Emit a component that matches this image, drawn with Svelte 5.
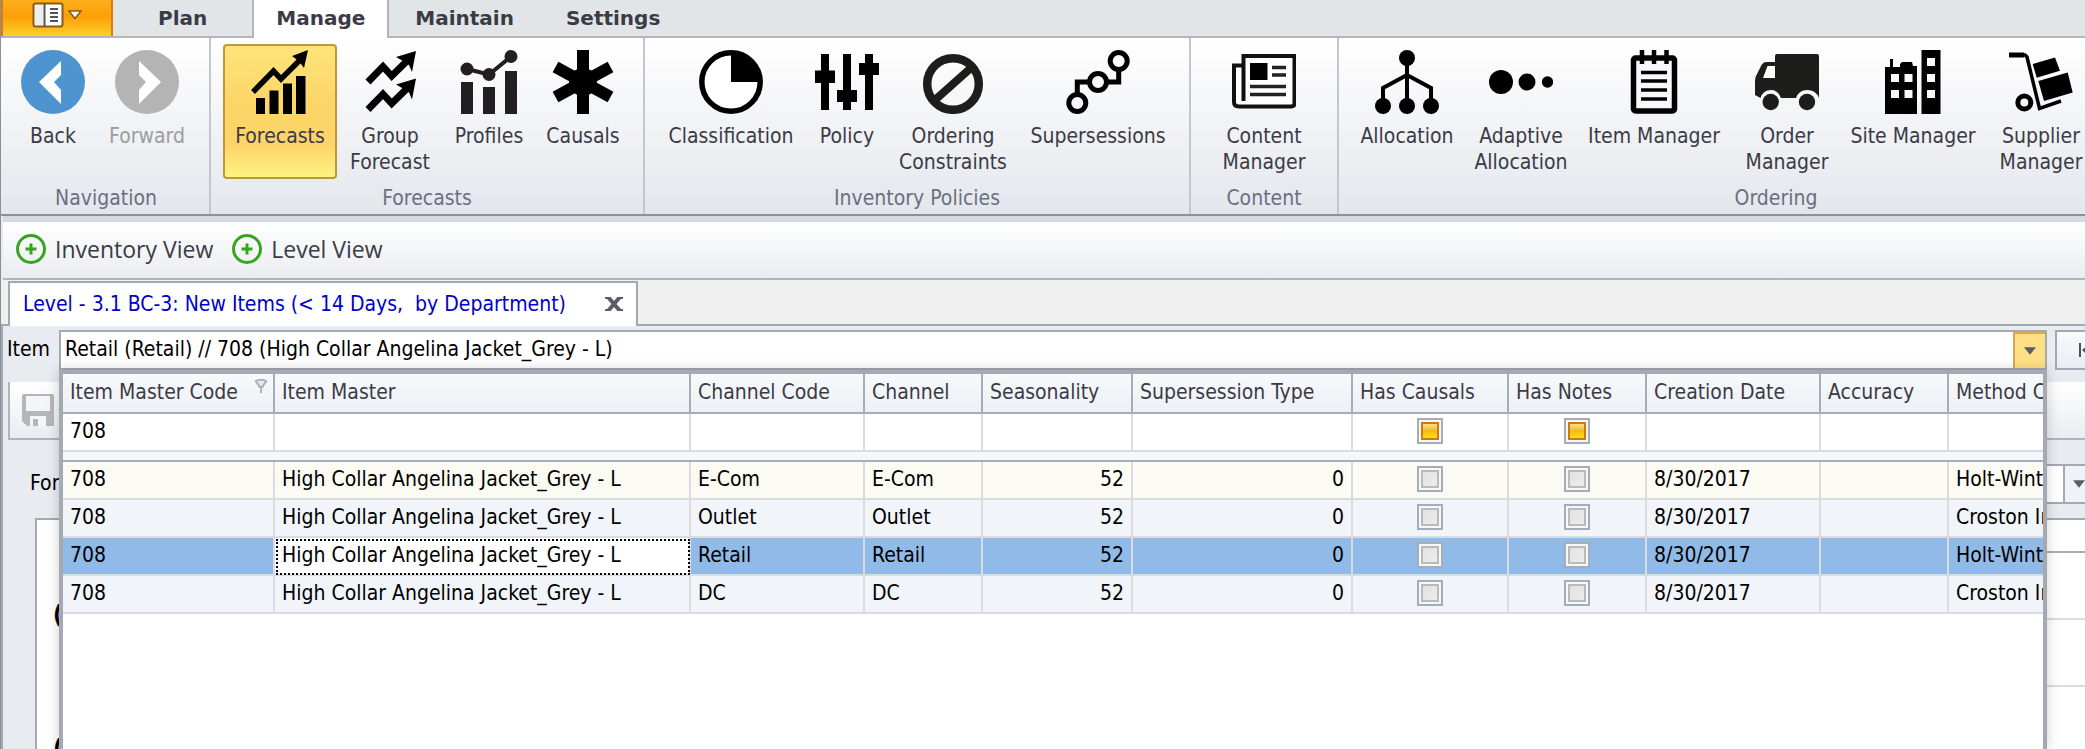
<script>
  const icons = {
    back: '<circle cx="32" cy="32" r="32" fill="#4e94d0"/><path fill="#fff" d="M40 11v14l-7 7 7 8v14L18 32z"/>',
    forward: '<circle cx="32" cy="32" r="32" fill="#b4b4b4"/><path fill="#fff" d="M24 11v14l7 7-7 8v14l22-22z"/>',
    forecasts: '<path d="M8 48h9v16H8zM21.500 40.500h9V64h-9zM35 33.500h9V64h-9zM48 26h9.500v38H48z"/><path d="M5 42L25.500 21l7.500 8L52 10" fill="none" stroke="#000" stroke-width="5.500"/><path d="M60 0L44 6l4 3 5 5 3 4z"/>',
    group: '<path d="M10 32L25 16.500l8.700 9.500L50 10M10 59.500L25 44l8.700 9.500L50 37.500" fill="none" stroke="#000" stroke-width="7"/><path d="M58 1L38 7l7 4 6 4 3 7zM58 28.500l-20 6 7 4 6 4 3 7z"/>',
    profiles: '<g fill="#231f20"><path d="M4 32h12v32H4zM26 37h12v27H26zM48 21h12v43H48z"/><circle cx="10" cy="19" r="6.500"/><circle cx="32" cy="24.500" r="6.500"/><circle cx="54" cy="6.500" r="6.500"/><path d="M10 19l22 5.500L54 6.500" fill="none" stroke="#231f20" stroke-width="4"/></g>',
    causals: '<path d="M32 0v64M4.500 17l55 30M59.500 17l-55 30" fill="none" stroke="#000" stroke-width="12"/><circle cx="32" cy="32" r="14"/>',
    classification: '<circle cx="32" cy="32" r="29.200" fill="#fff" stroke="#000" stroke-width="5.500"/><path d="M32 2v30h30A30 30 0 0 0 32 2z"/>',
    policy: '<path d="M6 4h8v56H6zM0 20.500h20V33H0zM28 4h8v56h-8zM22 40h20v12H22zM50 4h8v56h-8zM44 13h20v12H44z"/>',
    constraints: '<circle cx="32" cy="34" r="25.800" fill="none" stroke="#1d1d1b" stroke-width="8.500"/><path d="M14 50L51 17" stroke="#1d1d1b" stroke-width="8"/>',
    supersessions: '<g fill="none" stroke="#000" stroke-width="5"><circle cx="52.700" cy="11" r="8.500"/><circle cx="32" cy="32" r="8.500"/><circle cx="11.300" cy="53" r="8.500"/><path d="M11.300 44V32h12M41 32h11.700V20"/></g>',
    content: '<path fill="#fff" stroke="#111" stroke-width="4" d="M12 15.500H2V52q0 4.500 5 4.500h52q3.500 0 3.500-3.500V6h-51v45"/><path d="M18 13h17.500v17H18z"/><path d="M40 17.500h14M40 25h14M18 36.500h36M18 44.500h36" stroke="#222" stroke-width="3.500"/>',
    allocation: '<circle cx="32" cy="8" r="8"/><circle cx="8" cy="56" r="8"/><circle cx="32" cy="56" r="8"/><circle cx="56" cy="56" r="8"/><path d="M32 8v48M8 56V38l24-13 24 13v18" fill="none" stroke="#000" stroke-width="4"/>',
    adaptive: '<circle cx="12" cy="32" r="12"/><circle cx="38" cy="32" r="8.500"/><circle cx="58.500" cy="32" r="5.700"/>',
    item: '<rect x="11.500" y="8" width="41" height="53" rx="2" fill="#f7f8f9" stroke="#000" stroke-width="5.500"/><path d="M19 22.500h26M19 31h26M19 40h26M19 49h26" stroke="#000" stroke-width="3.500"/><path d="M20 0v14M32 0v14M44.500 0v14" stroke="#000" stroke-width="4.500"/>',
    order: '<g fill="#1d1d1b"><path d="M20 12V6q0-2 2-2h40q2 0 2 2v42q-3-8-12-8-8 0-11 8H26q-3-8-10-8-8 0-10.500 8L0 45V31q0-3 1-5l5-10q2-4 5-4z"/><circle cx="15.700" cy="52" r="8.200"/><circle cx="52" cy="52" r="8.200"/></g><path fill="#fff" d="M12.500 16H20v12H8z"/>',
    site: '<path fill-rule="evenodd" d="M4 17h5V9h3v8h7v-3l2-2h10l1 4h4v48H4zM10 24v8h8v-8zM23.500 24v8h8v-8zM10 40v8h8v-8zM23.500 40v8h8v-8zM40.500 0h19v64h-19zM46 8v8h8V8zM46 24v8h8v-8zM46 40v8h8v-8z"/>',
    supplier: '<path d="M0 5h16l2 2 12.500 51.500L52 51" fill="none" stroke="#000" stroke-width="3.500"/><path d="M0 2.500h15v5H0zM23.700 14L46 7.500l5 13.200-23.300 7zM29.300 31l29.400-8.500 5 20L35 51z"/><circle cx="15.300" cy="52.500" r="6.500" fill="none" stroke="#000" stroke-width="5"/>'
  };

  const groups = [
    { name: 'Navigation', width: 208, items: [
      { icon: 'back', label: 'Back', width: 92 },
      { icon: 'forward', label: 'Forward', width: 96, disabled: true } ] },
    { name: 'Forecasts', width: 434, items: [
      { icon: 'forecasts', label: 'Forecasts', width: 114, active: true },
      { icon: 'group', label: 'Group Forecast', width: 106 },
      { icon: 'profiles', label: 'Profiles', width: 92 },
      { icon: 'causals', label: 'Causals', width: 96 } ] },
    { name: 'Inventory Policies', width: 546, items: [
      { icon: 'classification', label: 'Classification', width: 144 },
      { icon: 'policy', label: 'Policy', width: 88 },
      { icon: 'constraints', label: 'Ordering Constraints', width: 124 },
      { icon: 'supersessions', label: 'Supersessions', width: 166 } ] },
    { name: 'Content', width: 148, items: [
      { icon: 'content', label: 'Content Manager', width: 120 } ] },
    { name: 'Ordering', width: 876, items: [
      { icon: 'allocation', label: 'Allocation', width: 112 },
      { icon: 'adaptive', label: 'Adaptive Allocation', width: 116 },
      { icon: 'item', label: 'Item Manager', width: 150 },
      { icon: 'order', label: 'Order Manager', width: 116 },
      { icon: 'site', label: 'Site Manager', width: 136 },
      { icon: 'supplier', label: 'Supplier Manager', width: 120 } ] }
  ];

  const tabs = ['Plan', 'Manage', 'Maintain', 'Settings'];
  let activeTab = $state('Manage');

  const columns = [
    { name: 'Item Master Code', width: 212 },
    { name: 'Item Master', width: 416 },
    { name: 'Channel Code', width: 174 },
    { name: 'Channel', width: 118 },
    { name: 'Seasonality', width: 150 },
    { name: 'Supersession Type', width: 220 },
    { name: 'Has Causals', width: 156 },
    { name: 'Has Notes', width: 138 },
    { name: 'Creation Date', width: 174 },
    { name: 'Accuracy', width: 128 },
    { name: 'Method Code', width: 200 }
  ];

  const item = 'High Collar Angelina Jacket_Grey - L';
  const rows = [
    { channel: 'E-Com', method: 'Holt-Winters' },
    { channel: 'Outlet', method: 'Croston Intermittent' },
    { channel: 'Retail', method: 'Holt-Winters' },
    { channel: 'DC', method: 'Croston Intermittent' }
  ];
  let selected = $state(2);
</script>

<div class="app">
  <nav class="tabs">
    <button class="menu" aria-label="Application menu">
      <svg width="32" height="26" viewBox="0 0 32 26"><rect x="1.500" y="1.500" width="29" height="23" rx="2" fill="#fff" stroke="#8a5a10" stroke-width="2"/><path d="M3 3h8v20H3z" fill="#eee"/><path d="M12.500 2v22" stroke="#555" stroke-width="2"/><path d="M18 7h8M18 11h8M18 15h8M18 19h8" stroke="#555" stroke-width="2"/></svg>
      <svg width="14" height="10" viewBox="0 0 14 10"><path d="M1 1h12L7 8.500z" fill="#fff" stroke="#8a5a10" stroke-width="1.500"/></svg>
    </button>
    {#each tabs as tab}
      <button class="tab" class:current={tab === activeTab} onclick={() => (activeTab = tab)}>{tab}</button>
    {/each}
  </nav>

  <header class="ribbon">
    {#each groups as group}
      <section class="group" style="width: {group.width}px">
        <div class="tools">
          {#each group.items as tool}
            <button class="tool" class:active={tool.active} disabled={tool.disabled} style="width: {tool.width}px">
              <svg width="64" height="64" viewBox="0 0 64 64">{@html icons[tool.icon]}</svg>
              <span>{tool.label}</span>
            </button>
          {/each}
        </div>
        <div class="caption">{group.name}</div>
      </section>
    {/each}
  </header>

  <div class="views">
    {#each ['Inventory View', 'Level View'] as view}
      <button>
        <svg width="32" height="32" viewBox="0 0 32 32" fill="none" stroke="#37a31f" stroke-width="3"><circle cx="16" cy="16" r="13.500"/><path d="M16 10.500v11M10.500 16h11"/></svg>
        {view}
      </button>
    {/each}
  </div>

  <div class="documents">
    <div class="document">
      <a href="#level">Level - 3.1 BC-3: New Items (&lt; 14 Days,&nbsp; by Department)</a>
      <button aria-label="Close"><svg width="18" height="14" viewBox="0 0 18 14"><path d="M3 0l12 14M15 0L3 14" stroke="#5a5e66" stroke-width="4"/><path d="M0 1h6M12 1h6M0 13h6M12 13h6" stroke="#5a5e66" stroke-width="2"/></svg></button>
    </div>
  </div>

  <main class="workspace">
    <div class="picker">
      <label for="item">Item</label>
      <div class="combo">
        <input id="item" type="text" value="Retail (Retail) // 708 (High Collar Angelina Jacket_Grey - L)" />
        <button aria-label="Open list"><svg width="12" height="8" viewBox="0 0 14 9"><path d="M0 0h14L7 9z" fill="#5a5e66"/></svg></button>
      </div>
      <button class="first" aria-label="First item"><svg width="20" height="14" viewBox="0 0 20 14"><path d="M1 0v14" stroke="#4c5058" stroke-width="2"/><path d="M3 7l8-7v5h9v4h-9v5z" fill="#4c5058"/></svg></button>
    </div>

    <div class="actions">
      <button aria-label="Save" disabled><svg width="32" height="32" viewBox="0 0 32 32"><path fill="#b4b6b9" d="M2 0h28q2 0 2 2v30H5l-5-5V2q0-2 2-2z"/><path fill="#f4f5f7" d="M4 2h24v15H4zM8 22h16v10H8z"/><path fill="#b4b6b9" d="M11 25h5v7h-5z"/></svg></button>
    </div>

    <div class="options">
      <label for="forecast">Forecast</label>
      <select id="forecast"><option></option></select>
      <span class="arrow"><svg width="12" height="8" viewBox="0 0 14 9"><path d="M0 0h14L7 9z" fill="#5a5e66"/></svg></span>
    </div>

    <div class="chart">
      <div class="axis"><span>(</span><span>(</span></div>
      <div class="plot"><i></i><i></i><i></i></div>
    </div>

    <div class="popup">
      <table>
        <colgroup>
          {#each columns as column}<col style="width: {column.width}px" />{/each}
        </colgroup>
        <thead>
          <tr>
            {#each columns as column, i}
              <th>
                <div class="heading">
                  {column.name}
                  {#if i === 0}<svg width="14" height="14" viewBox="0 0 14 16"><path d="M1 2.500Q7-1 13 2.500L9 8v1H5V8zM7 8v8" fill="#e4e8ee" stroke="#a4abb5" stroke-width="2"/></svg>{/if}
                </div>
              </th>
            {/each}
          </tr>
          <tr class="filter">
            {#each columns as column, i}
              <td class:center={i === 6 || i === 7}>
                {#if i === 0}708{:else if i === 6 || i === 7}<input type="checkbox" class="any" aria-label={column.name} />{/if}
              </td>
            {/each}
          </tr>
          <tr class="divider"><td colspan={columns.length}></td></tr>
        </thead>
        <tbody>
          {#each rows as row, i}
            <tr class:selected={i === selected} onclick={() => (selected = i)}>
              <td>708</td>
              <td class="focusable">{item}</td>
              <td>{row.channel}</td>
              <td>{row.channel}</td>
              <td class="number">52</td>
              <td class="number">0</td>
              <td class="center"><input type="checkbox" aria-label="Has Causals" /></td>
              <td class="center"><input type="checkbox" aria-label="Has Notes" /></td>
              <td>8/30/2017</td>
              <td></td>
              <td>{row.method}</td>
            </tr>
          {/each}
        </tbody>
      </table>
    </div>
  </main>
</div>

<style>
  :global(body) { margin: 0; }
  .app, button, input, select { font: 21px/26px "DejaVu Sans Condensed", "DejaVu Sans", Tahoma, sans-serif; }
  .app { box-sizing: border-box; min-height: 100vh; display: flex; flex-direction: column; overflow: hidden; background: #e8ebf0; border-left: 1px solid #8a8f98; }
  button { box-sizing: border-box; margin: 0; padding: 0; border: 0; background: none; color: inherit; }
  svg { display: block; flex: none; }

  .tabs { display: flex; height: 38px; background: linear-gradient(#e1e5e8 36px, #b2b6ba 36px); }
  .menu { width: 112px; height: 36px; display: flex; align-items: center; justify-content: center; gap: 4px; padding-bottom: 6px; border: 2px solid #e07a10; border-width: 0 2px; background: linear-gradient(#fdb01c, #fb9f08 45%, #fdd02a); }
  .tab { height: 36px; padding: 0 26px; font-family: "DejaVu Sans", Tahoma, sans-serif; font-size: 20px; font-weight: bold; color: #3b3b46; }
  .tab:nth-of-type(2) { padding: 0 45px; }
  .tab.current { height: 38px; padding: 0 22px 2px; background: #fff; border: 2px solid #b2b6ba; border-width: 0 2px; }

  .ribbon { display: flex; padding-left: 2px; background: linear-gradient(#fff, #fafafb 20%, #e3e7ec); border-bottom: 2px solid #8c9098; color: #3b3b46; }
  .group { flex: none; box-sizing: border-box; height: 176px; padding-top: 6px; border-right: 2px solid #c3c7cd; }
  .tools { display: flex; justify-content: center; height: 141px; }
  .group:first-child .tools { justify-content: flex-start; padding-left: 4px; }
  .group:nth-child(3) .tools { justify-content: flex-end; padding-right: 8px; }
  .group:last-child .tools { justify-content: flex-start; padding-left: 12px; }
  .tool { height: 135px; flex: none; display: flex; flex-direction: column; align-items: center; gap: 9px; padding-top: 4px; border: 2px solid transparent; border-radius: 4px; }
  .tool.active { border-color: #c2953a; background: linear-gradient(#fee47a, #fdd468 45%, #fdd468 75%, #fff284); }
  .tool:disabled { color: #9c9ca2; }
  .caption { text-align: center; color: #6c6f82; }

  .views { display: flex; gap: 18px; height: 56px; margin-left: 2px; padding-left: 12px; border-top: 6px solid #d6d9de; border-bottom: 2px solid #b0b5bc; background: linear-gradient(#fff, #e9ecf0); color: #3b3b46; }
  .views button { display: flex; align-items: center; gap: 8px; padding-bottom: 2px; font-family: "Open Sans", "Segoe UI", sans-serif; font-size: 23px; }

  .documents { display: flex; height: 45px; padding: 1px 0 0 7px; background: linear-gradient(#f0f0f0 44px, #a2a9b3 44px); }
  .document { box-sizing: border-box; min-width: 630px; display: flex; align-items: center; justify-content: space-between; gap: 26px; padding: 0 13px 2px; background: #fff; border: 2px solid #a2a9b3; border-bottom: 0; }
  .document a { color: #0000c8; text-decoration: none; }

  .workspace { position: relative; flex: 1; min-height: 400px; display: flex; flex-direction: column; overflow: hidden; border-left: 2px solid #a2a9b3; }
  .picker { display: flex; align-items: stretch; height: 40px; padding-top: 4px; }
  .picker label { width: 52px; padding-left: 4px; line-height: 38px; flex: none; }
  .combo { flex: 1; display: flex; margin-right: 8px; border: 2px solid #a5a9b2; background: #fff; }
  .combo input { flex: 1; min-width: 0; border: 0; padding: 0 4px 2px; outline: 0; background: none; }
  .combo button { width: 32px; display: grid; place-items: center; border: 2px solid #dba655; border-width: 2px 0 0 2px; background: #fee084; }
  .first { flex: none; width: 60px; margin-right: -30px; padding-left: 22px; border: 2px solid #a2a9b3; background: linear-gradient(#f8fafc, #e9edf2); }
  .actions { height: 56px; margin: 12px 0 0 5px; display: flex; align-items: center; padding-left: 12px; border: solid #b0b5bc; border-width: 0 0 2px 2px; background: linear-gradient(#fff, #e9ecf0); }
  .options { display: flex; height: 40px; margin: 24px 0 0 27px; line-height: 38px; }
  .options label { width: 120px; }
  .options select { flex: 1; appearance: none; border: 2px solid #a2a9b3; border-right: 0; background: #fff; padding: 0; }
  .arrow { width: 12px; display: flex; align-items: center; padding-left: 8px; border: 2px solid #a2a9b3; border-right: 0; background: #eff2f6; overflow: hidden; }
  .chart { flex: 1; display: flex; margin: 14px 0 0 32px; border: solid #a2a9b3; border-width: 2px 0 0 2px; background: #fff; }
  .axis { width: 60px; height: 200px; padding: 82px 0 0 16px; box-sizing: border-box; }
  .axis span { display: block; height: 134px; font-weight: bold; font-size: 24px; }
  .plot { flex: 1; }
  .plot i { display: block; box-sizing: border-box; height: 67px; border-bottom: 2px solid #dadcdf; }
  .plot i:first-child { height: 33px; border-color: #a9abad; }

  .popup { position: absolute; z-index: 1; top: 44px; left: 56px; right: 38px; bottom: 0; overflow: hidden; border: 4px solid #a5a9b2; border-bottom: 0; background: #fff; box-shadow: 0 0 12px rgba(0, 0, 0, 0.2); }
  table { width: 0; table-layout: fixed; border-collapse: separate; border-spacing: 0; }
  th, td { box-sizing: border-box; height: 38px; padding: 0 7px 2px; overflow: hidden; white-space: nowrap; text-align: left; border: solid #dadce0; border-width: 0 2px 2px 0; }
  th { height: 40px; font-weight: normal; color: #3b3b46; border-color: #a5adb8; background: linear-gradient(#f7f9fb, #edf0f5); }
  .heading { display: flex; justify-content: space-between; }
  .heading svg { margin-right: -2px; }
  .filter td { background: #fff; }
  .divider td { height: 10px; padding: 0; border-color: #a5adb8; background: #f5f7fa; }
  tbody td { background: #f1f5fa; }
  tbody tr:first-child td { background: #fbfbf3; }
  tbody .selected td { background: #90bbe8; }
  tbody .selected .focusable { background: #fff; outline: 2px dotted #000; outline-offset: -3px; }
  td.number { text-align: right; }
  td.center { text-align: center; }
  table input { appearance: none; display: block; box-sizing: border-box; width: 26px; height: 26px; margin: 0 auto; padding: 2px; border: 2px solid #a5adb8; background: #f7f7f7; }
  table input::before { content: ""; display: block; box-sizing: border-box; width: 18px; height: 18px; border: 2px solid #b8babc; background: linear-gradient(135deg, #e2e2e2, #ececec); }
  table input.any::before { border-color: #cc7a14; background: linear-gradient(#fbe08a, #f5b81c 50%, #fde400); }
</style>
